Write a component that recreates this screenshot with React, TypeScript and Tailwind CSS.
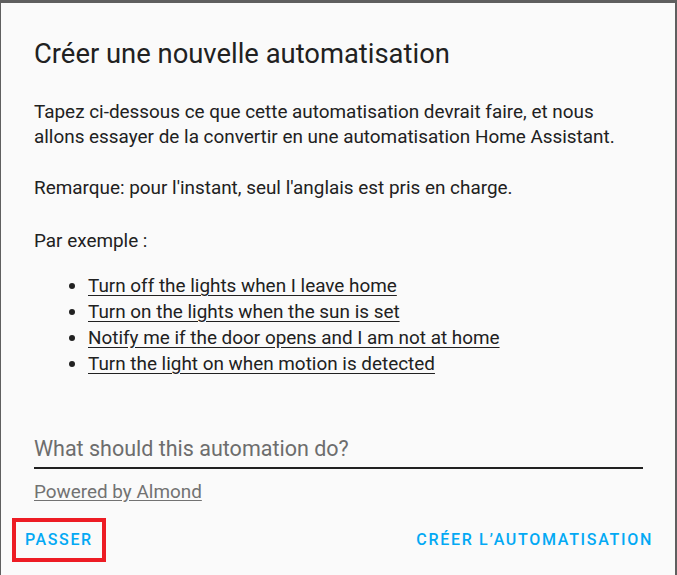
export default function App() {
  const examples = [
    "Turn off the lights when I leave home",
    "Turn on the lights when the sun is set",
    "Notify me if the door opens and I am not at home",
    "Turn the light on when motion is detected",
  ];

  return (
    <div className="w-[677px] h-[575px] bg-[#5f5f5f] pt-[3px] pl-[1px] pr-[2px] overflow-hidden font-['Roboto',sans-serif]">
      <div className="h-full bg-[#fafafa] flex flex-col">
        <h2 className="pl-[33px] pt-[35px] text-[27.4px] leading-[32px] text-[#212121] font-normal">
          Créer une nouvelle automatisation
        </h2>

        <div className="pl-[33px] pr-[32px] pt-[29px] text-[18.9px] text-[#212121]">
          <p className="leading-[25px]">
            Tapez ci-dessous ce que cette automatisation devrait faire, et nous allons essayer de la convertir en une
            automatisation Home Assistant.
          </p>
          <p className="leading-[25px] mt-[26px]">Remarque: pour l'instant, seul l'anglais est pris en charge.</p>
          <p className="leading-[25px] mt-[28px]">Par exemple :</p>
          <ul className="list-disc pl-[54px] mt-[20px]">
            {examples.map((e) => (
              <li key={e} className="leading-[26px]">
                <a href="#" className="underline underline-offset-[3px] text-[#212121]">
                  {e}
                </a>
              </li>
            ))}
          </ul>

          <div className="mt-[58px] border-b-2 border-[#212121] pb-[3px]">
            <input
              placeholder="What should this automation do?"
              className="w-full bg-transparent outline-none text-[21.5px] leading-[28px] text-[#212121] placeholder:text-[#6d6d6d]"
            />
          </div>

          <a href="#" className="inline-block mt-[11px] text-[18.9px] leading-[24px] text-[#727272] underline underline-offset-[2px]">
            Powered by Almond
          </a>
        </div>

        <div className="flex items-center justify-between pl-[11px] pr-[14px] mt-[11px]">
          <button className="border-[4px] border-[#ed1c24] h-[44px] px-[9px] text-[16px] font-medium tracking-[1.6px] text-[#03a9f4]">
            PASSER
          </button>
          <button className="h-[44px] px-[8px] text-[16px] font-medium tracking-[1.7px] text-[#03a9f4]">
            CRÉER L’AUTOMATISATION
          </button>
        </div>
      </div>
    </div>
  );
}
